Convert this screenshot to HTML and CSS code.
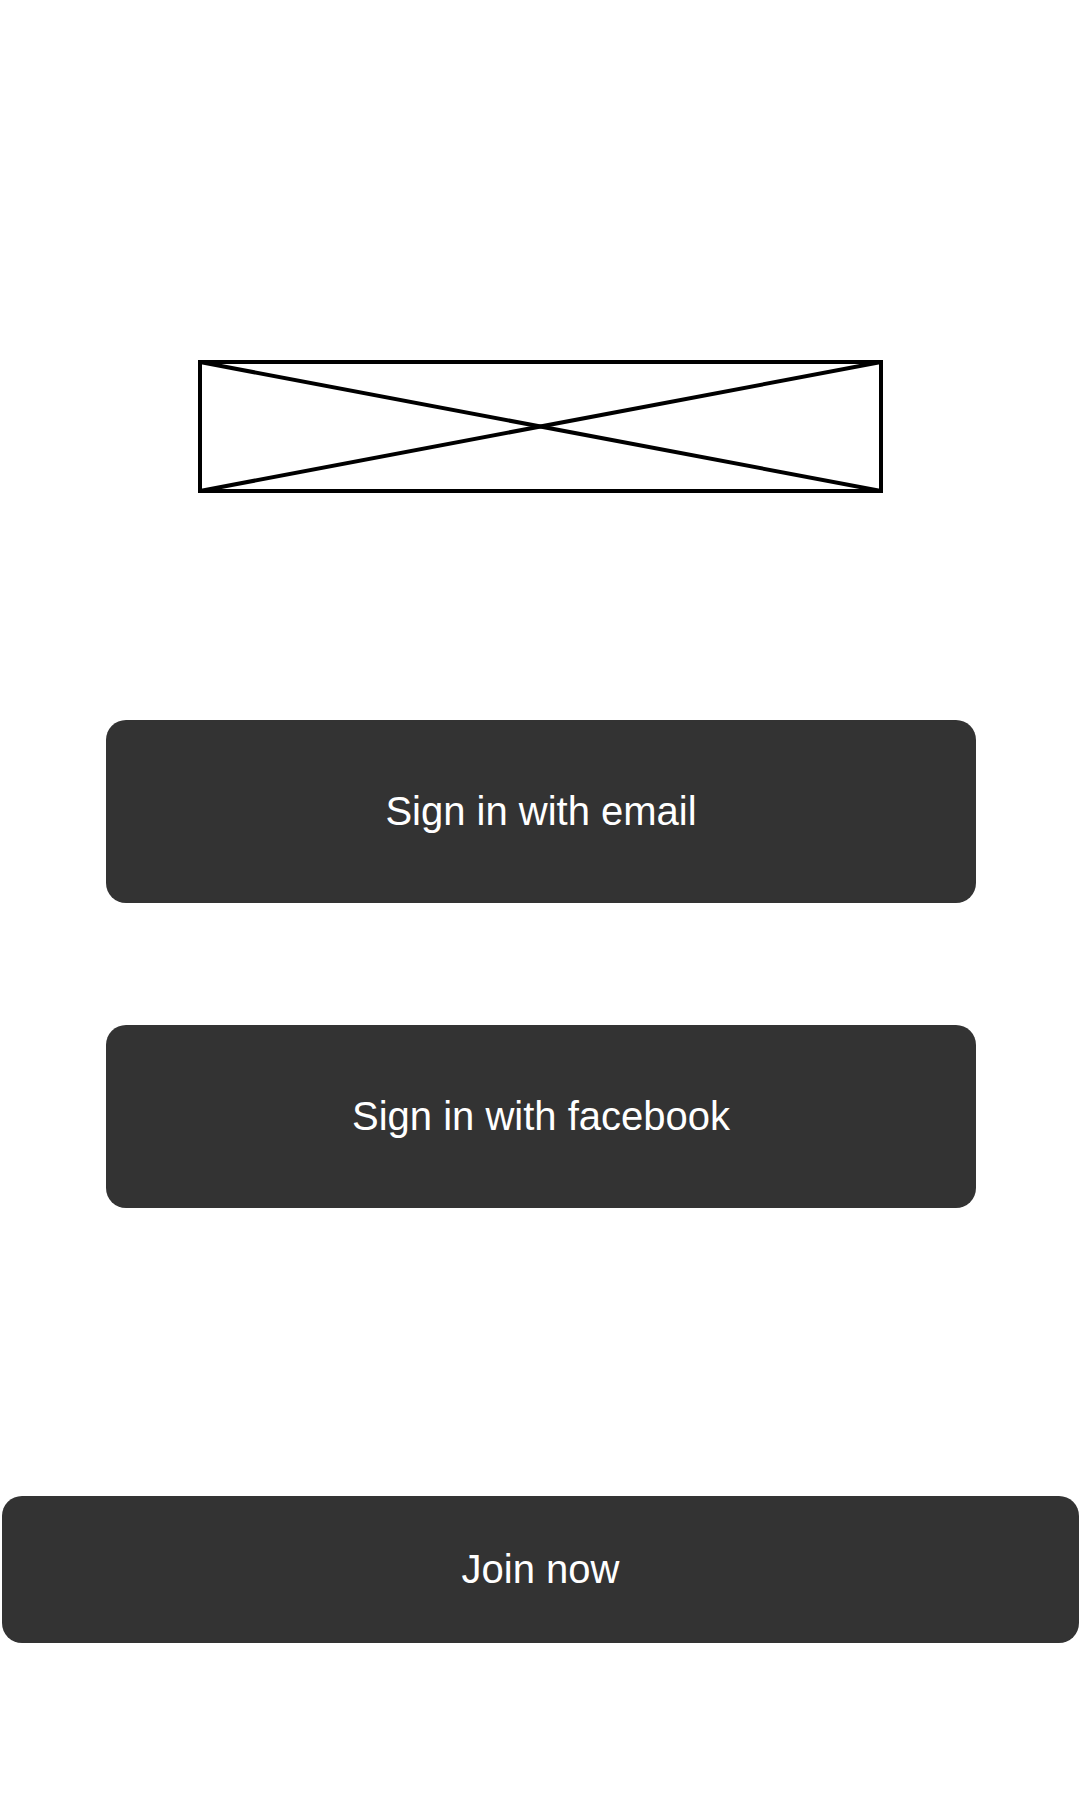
FILE: index.html
```html
<!DOCTYPE html>
<html lang="en">
<head>
<meta charset="utf-8">
<title>Sign in</title>
<link rel="stylesheet" href="styles.css">
</head>
<body>
<main class="page">
  <div class="logo">
    <svg width="685" height="133" viewBox="0 0 685 133" aria-label="Logo placeholder">
      <rect x="2" y="2" width="681" height="129" fill="none" stroke="#000" stroke-width="4"/>
      <line x1="2" y1="2" x2="683" y2="131" stroke="#000" stroke-width="4"/>
      <line x1="2" y1="131" x2="683" y2="2" stroke="#000" stroke-width="4"/>
    </svg>
  </div>
  <div class="signin">
    <button class="btn btn-wide">Sign in with email</button>
    <button class="btn btn-wide">Sign in with facebook</button>
  </div>
  <button class="btn btn-join">Join now</button>
</main>
</body>
</html>
```
FILE: styles.css
```css
html, body {
  margin: 0;
  padding: 0;
  background: #ffffff;
}
.page {
  width: 1080px;
  display: flex;
  flex-direction: column;
  align-items: center;
  padding-top: 360px;
  font-family: "Liberation Sans", Arial, sans-serif;
}
.logo {
  display: flex;
  justify-content: center;
  width: 100%;
  padding-left: 1px;
}
.logo svg {
  display: block;
}
.signin {
  display: flex;
  flex-direction: column;
  gap: 122px;
  margin-top: 227px;
  align-items: center;
}
.btn {
  display: flex;
  align-items: center;
  justify-content: center;
  border: none;
  background: #333333;
  color: #ffffff;
  font-family: "Liberation Sans", Arial, sans-serif;
  font-size: 40px;
  padding: 0;
  margin: 0;
}
.btn-wide {
  width: 870px;
  height: 183px;
  border-radius: 20px;
  margin-left: 2px;
}
.btn-join {
  width: 1077px;
  height: 147px;
  border-radius: 20px;
  margin-top: 288px;
  margin-left: 1px;
}
```
